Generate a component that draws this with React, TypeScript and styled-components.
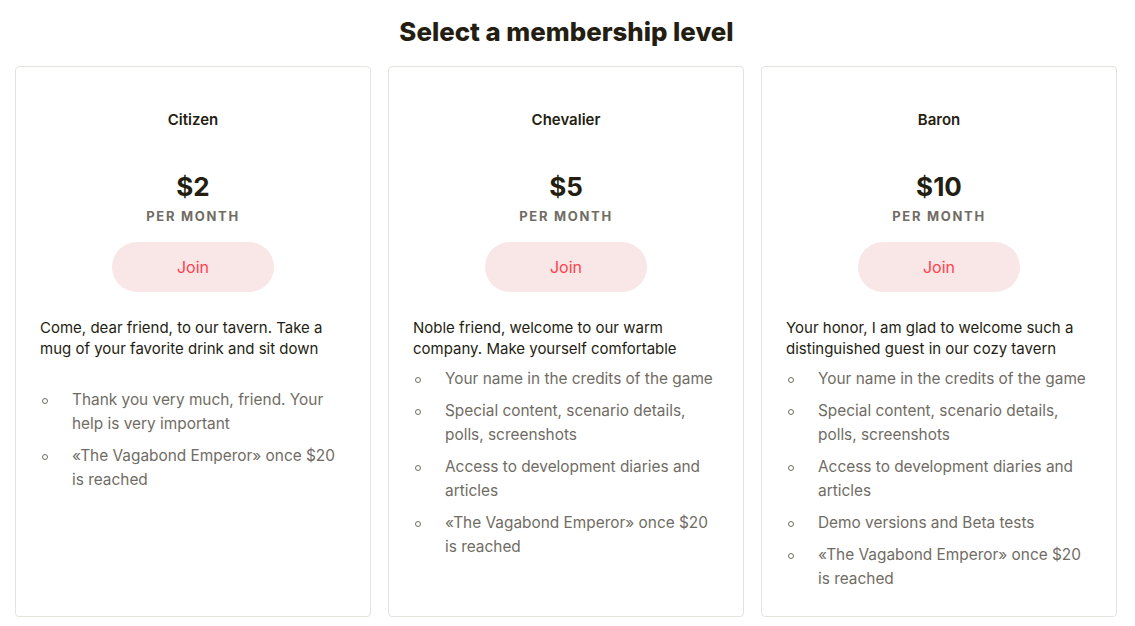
import React from "react";
import styled, { createGlobalStyle } from "styled-components";

const Global = createGlobalStyle`
  html, body { margin: 0; padding: 0; background: #ffffff; }
  body { font-family: Inter, "Noto Sans", sans-serif; color: #241e12; }
`;

const Page = styled.div`
  width: 1135px;
  padding: 0 17px 0 15px;
  box-sizing: border-box;
`;

const Title = styled.h1`
  margin: 0;
  padding-top: 15px;
  height: 66px;
  box-sizing: border-box;
  text-align: center;
  font-family: Inter, sans-serif;
  font-weight: 800;
  font-size: 25.8px;
  line-height: 34px;
  color: #241e12;
`;

const Grid = styled.div`
  display: grid;
  grid-template-columns: repeat(3, 356px);
  gap: 17px;
`;

const Card = styled.section`
  height: 551px;
  box-sizing: border-box;
  border: 1px solid #e5e3dd;
  border-radius: 4px;
  padding: 42px 24px 24px;
  display: flex;
  flex-direction: column;
  & > * { flex-shrink: 0; }
`;

const Name = styled.div`
  text-align: center;
  font-size: 15px;
  line-height: 21px;
  font-weight: 600;
  color: #241e12;
`;

const Price = styled.div`
  margin-top: 41px;
  text-align: center;
  font-size: 26px;
  line-height: 32px;
  font-weight: 700;
  color: #241e12;
`;

const Per = styled.div`
  margin-top: 4px;
  text-align: center;
  font-size: 13px;
  line-height: 18px;
  font-weight: 700;
  letter-spacing: 1.7px;
  color: #706c64;
`;

const Join = styled.button`
  align-self: center;
  margin-top: 17px;
  width: 162px;
  height: 50px;
  border: none;
  border-radius: 25px;
  background: #f9e6e7;
  color: #ff424d;
  font-family: Inter, sans-serif;
  font-size: 16px;
  cursor: pointer;
`;

const Desc = styled.p<{ $lines: number }>`
  margin: 25px 0 0;
  font-size: 15px;
  line-height: 21px;
  color: #241e12;
  min-height: ${(p) => p.$lines * 21}px;
`;

const List = styled.ul`
  list-style: none;
  margin: 8px 0 0;
  padding: 0;
  display: flex;
  flex-direction: column;
  gap: 8px;
`;

const Item = styled.li`
  position: relative;
  padding-left: 32px;
  font-size: 15.4px;
  line-height: 24px;
  color: #706c64;
  &::before {
    content: "";
    position: absolute;
    left: 2px;
    top: 10px;
    width: 4px;
    height: 4px;
    border: 1px solid #706c64;
    border-radius: 50%;
  }
`;

const tiers = [
  {
    name: "Citizen",
    price: "$2",
    desc: "Come, dear friend, to our tavern. Take a mug of your favorite drink and sit down",
    lines: 3,
    items: [
      "Thank you very much, friend. Your help is very important",
      "«The Vagabond Emperor» once $20 is reached",
    ],
  },
  {
    name: "Chevalier",
    price: "$5",
    desc: "Noble friend, welcome to our warm company. Make yourself comfortable",
    lines: 2,
    items: [
      "Your name in the credits of the game",
      "Special content, scenario details, polls, screenshots",
      "Access to development diaries and articles",
      "«The Vagabond Emperor» once $20 is reached",
    ],
  },
  {
    name: "Baron",
    price: "$10",
    desc: "Your honor, I am glad to welcome such a distinguished guest in our cozy tavern",
    lines: 2,
    items: [
      "Your name in the credits of the game",
      "Special content, scenario details, polls, screenshots",
      "Access to development diaries and articles",
      "Demo versions and Beta tests",
      "«The Vagabond Emperor» once $20 is reached",
    ],
  },
];

export default function App() {
  return (
    <Page>
      <Global />
      <Title>Select a membership level</Title>
      <Grid>
        {tiers.map((t) => (
          <Card key={t.name}>
            <Name>{t.name}</Name>
            <Price>{t.price}</Price>
            <Per>PER MONTH</Per>
            <Join>Join</Join>
            <Desc $lines={t.lines}>{t.desc}</Desc>
            <List>
              {t.items.map((i) => (
                <Item key={i}>{i}</Item>
              ))}
            </List>
          </Card>
        ))}
      </Grid>
    </Page>
  );
}
